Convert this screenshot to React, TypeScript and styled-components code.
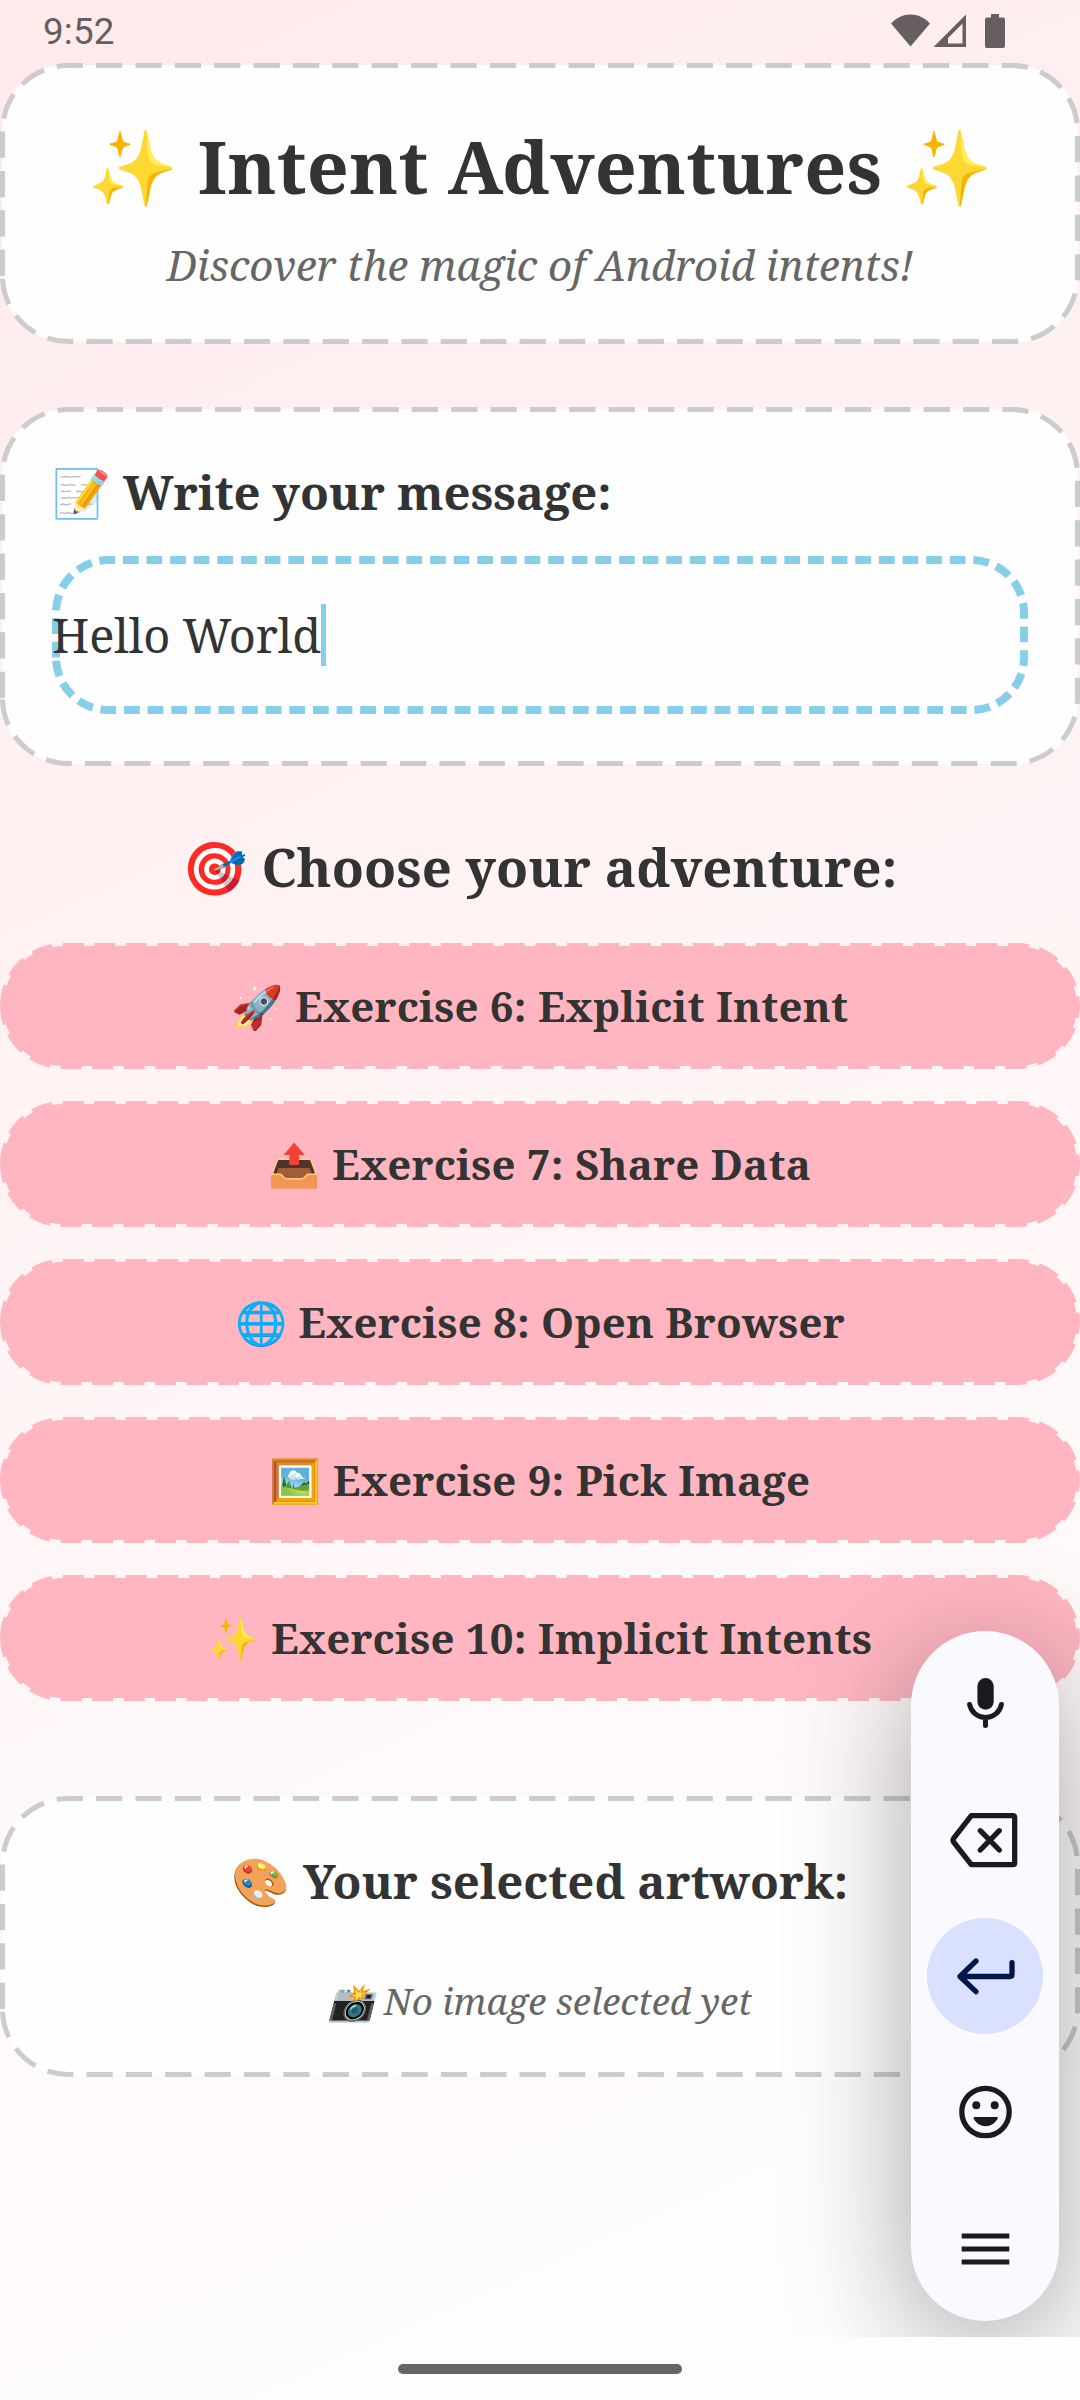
import React from "react";
import styled, { createGlobalStyle } from "styled-components";

const serif = `"Noto Serif", "DejaVu Serif Condensed", "DejaVu Serif", "Noto Color Emoji", serif`;

const GlobalStyle = createGlobalStyle`
  body { margin: 0; }
  * { box-sizing: border-box; }
`;

const Screen = styled.div`
  position: relative;
  width: 1080px;
  height: 2400px;
  overflow: hidden;
  display: flex;
  flex-direction: column;
  background: linear-gradient(155.8deg, #ffeaec 0%, #fff3f4 38%, #fefefe 100%);
  font-family: ${serif};
  color: #333333;
`;

const StatusBar = styled.header`
  height: 63px;
  flex: none;
  display: flex;
  align-items: flex-start;
  justify-content: space-between;
  padding: 11px 70px 0 43px;
  font: 400 36.75px/42px Roboto, sans-serif;
  letter-spacing: 0.2px;
  color: #665f60;
`;

const StatusIcons = styled.svg`
  margin-top: 2px;
`;

const Frame = styled.svg`
  position: absolute;
  inset: 0;
  pointer-events: none;
`;

const Card = styled.section<{ $h: number; $mt: number; $align: string }>`
  position: relative;
  flex: none;
  height: ${(p) => p.$h}px;
  margin-top: ${(p) => p.$mt}px;
  padding: 50px;
  display: flex;
  flex-direction: column;
  align-items: ${(p) => p.$align};
  border: 2px solid transparent;
  border-radius: 66px;
  background: #fefefe padding-box;
`;

const Line = styled.div<{ $size: number; $h: number; $ls?: number; $bold?: boolean; $italic?: boolean; $mt?: number }>`
  flex: none;
  display: flex;
  align-items: center;
  gap: ${(p) => p.$size * 0.26}px;
  height: ${(p) => p.$h}px;
  margin-top: ${(p) => p.$mt ?? 0}px;
  font-size: ${(p) => p.$size}px;
  font-weight: ${(p) => (p.$bold ? 700 : 400)};
  font-style: ${(p) => (p.$italic ? "italic" : "normal")};
  letter-spacing: ${(p) => p.$ls ?? 0}px;
  color: ${(p) => (p.$italic ? "#666666" : "#333333")};
  line-height: 1;
  white-space: nowrap;
`;

const Emoji = styled.span``;

const Field = styled.div`
  position: relative;
  width: 976px;
  height: 158px;
  margin-top: 32px;
  display: flex;
  align-items: center;
`;

const FieldText = styled.span`
  position: relative;
  font-size: 47px;
  line-height: 76px;
  letter-spacing: -0.08px;
`;

const Caret = styled.span`
  width: 5px;
  height: 62px;
  background: #87ceeb;
`;

const Heading = styled.div`
  flex: none;
  display: flex;
  justify-content: center;
  margin-top: 54px;
`;

const List = styled.div`
  flex: none;
  display: flex;
  flex-direction: column;
  gap: 32px;
  margin-top: 28px;
`;

const ActionButton = styled.button`
  position: relative;
  height: 126px;
  width: 100%;
  padding: 0;
  border: 3px solid transparent;
  border-radius: 63px;
  background: #ffb6c1 padding-box;
  display: flex;
  align-items: center;
  justify-content: center;
  font-family: inherit;
`;

const ToolbarLayer = styled.div`
  position: absolute;
  left: 0;
  top: 0;
  width: 1080px;
  height: 2337px;
  overflow: hidden;
  pointer-events: none;
`;

const Toolbar = styled.div`
  position: absolute;
  left: 911px;
  top: 1631px;
  width: 148px;
  height: 690px;
  padding: 4px 0;
  border-radius: 74px;
  background: #f9f9ff;
  box-shadow: 0 28px 120px rgba(0, 0, 0, 0.35);
  display: flex;
  flex-direction: column;
  align-items: center;
`;

const Key = styled.div<{ $active?: boolean }>`
  height: 136.4px;
  width: 148px;
  display: flex;
  align-items: center;
  justify-content: center;
  background: ${(p) => (p.$active ? "radial-gradient(circle, #dae1ff 57.7px, transparent 58.3px)" : "none")};
  color: ${(p) => (p.$active ? "#00174b" : "#1a1b21")};
`;

const NavHandle = styled.div`
  position: absolute;
  left: 398px;
  top: 2364px;
  width: 284px;
  height: 10px;
  border-radius: 5px;
  background: #666666;
`;

/** Dashed rounded outline; the dash run begins at the lower end of the left side and goes clockwise. */
function Dashes({ w, h, r, stroke, dash, gap, color }: { w: number; h: number; r: number; stroke: number; dash: number; gap: number; color: string }) {
  const i = stroke / 2;
  const k = Math.min(r, h / 2 - i);
  const d = `M${i} ${h - i - k}V${i + k}A${k} ${k} 0 0 1 ${i + k} ${i}H${w - i - k}A${k} ${k} 0 0 1 ${w - i} ${i + k}V${h - i - k}A${k} ${k} 0 0 1 ${w - i - k} ${h - i}H${i + k}A${k} ${k} 0 0 1 ${i} ${h - i - k}`;
  return <path d={d} fill="none" stroke={color} strokeWidth={stroke} strokeDasharray={`${dash} ${gap}`} />;
}

const CardFrame = styled(Frame)`
  inset: -2px;
`;
const ButtonFrame = styled(Frame)`
  inset: -3px;
`;

function CardOutline({ h }: { h: number }) {
  return (
    <CardFrame width="1080" height={h}>
      <Dashes w={1080} h={h} r={65.6} stroke={5} dash={26.25} gap={13.125} color="#cccccc" />
    </CardFrame>
  );
}

function KeyIcon({ children }: { children: React.ReactNode }) {
  return (
    <svg width="72" height="72" viewBox="0 0 72 72" fill="none" stroke="currentColor" strokeWidth="5.3" strokeLinecap="round" strokeLinejoin="round">
      {children}
    </svg>
  );
}

const actions = [
  { icon: "🚀", label: "Exercise 6: Explicit Intent" },
  { icon: "📤", label: "Exercise 7: Share Data" },
  { icon: "🌐", label: "Exercise 8: Open Browser" },
  { icon: "🖼️", label: "Exercise 9: Pick Image" },
  { icon: "✨", label: "Exercise 10: Implicit Intents" },
];

export default function App() {
  return (
    <Screen>
      <GlobalStyle />
      <StatusBar>
        <span>9:52</span>
        <StatusIcons width="120" height="36" viewBox="890 13 120 36" fill="#665f60">
          <path d="M891 23.5C902 11.500 919 11.500 930 23.500L910.500 46.500Z" />
          <path fillRule="evenodd" d="M966 14.500V47H933.500ZM962.500 23.500L948 38V43.500H962.500Z" />
          <path d="M991 14h8v3.500h4a2 2 0 0 1 2 2v26.500a2 2 0 0 1-2 2h-16a2 2 0 0 1-2-2v-26.500a2 2 0 0 1 2-2h4z" />
        </StatusIcons>
      </StatusBar>

      <Card $h={281} $mt={0} $align="center">
        <CardOutline h={281} />
        <Line $size={73.5} $h={101} $ls={0.25} $bold>
          <Emoji>✨</Emoji>
          <span>Intent Adventures</span>
          <Emoji>✨</Emoji>
        </Line>
        <Line $size={42} $h={58} $mt={20} $ls={-0.06} $italic>
          Discover the magic of Android intents!
        </Line>
      </Card>

      <Card $h={359} $mt={63} $align="flex-start">
        <CardOutline h={359} />
        <Line $size={47.25} $h={64} $mt={1} $ls={-0.1} $bold>
          <Emoji>📝</Emoji>
          <span>Write your message:</span>
        </Line>
        <Field>
          <Frame width="976" height="158">
            <Dashes w={976} h={158} r={52.5} stroke={8} dash={15.75} gap={7.875} color="#87ceeb" />
          </Frame>
          <FieldText>Hello World</FieldText>
          <Caret />
        </Field>
      </Card>

      <Heading>
        <Line $size={52.5} $h={95} $ls={0.08} $bold>
          <Emoji>🎯</Emoji>
          <span>Choose your adventure:</span>
        </Line>
      </Heading>

      <List>
        {actions.map((a) => (
          <ActionButton key={a.label}>
            <ButtonFrame width="1080" height="126">
              <Dashes w={1080} h={126} r={65.6} stroke={5.25} dash={21} gap={10.5} color="#ffb6c1" />
            </ButtonFrame>
            <Line as="span" $size={42} $h={60} $ls={0.22} $bold>
              <Emoji>{a.icon}</Emoji>
              <span>{a.label}</span>
            </Line>
          </ActionButton>
        ))}
      </List>

      <Card $h={281} $mt={95} $align="center">
        <CardOutline h={281} />
        <Line $size={47.25} $h={64} $mt={1} $bold>
          <Emoji>🎨</Emoji>
          <span>Your selected artwork:</span>
        </Line>
        <Line $size={36.75} $h={50} $mt={63} $italic>
          <Emoji>📸</Emoji>
          <span>No image selected yet</span>
        </Line>
      </Card>

      <ToolbarLayer>
        <Toolbar>
          <Key>
            <KeyIcon>
              <rect x="28.400" y="11" width="16.300" height="31.700" rx="8.150" fill="currentColor" stroke="none" />
              <path d="M20.600 37.500A16.200 16.200 0 0 0 52.400 37.500M36.500 50.500V58.500" strokeWidth="5" />
            </KeyIcon>
          </Key>
          <Key>
            <KeyIcon>
              <path d="M22.300 11.700H63.700Q65.700 11.700 65.700 13.700V58.700Q65.700 60.700 63.700 60.700H22.300L4.600 38Q3.400 36.200 4.600 34.400ZM31.300 26.700L50.300 46M50.300 26.700L31.300 46" />
            </KeyIcon>
          </Key>
          <Key $active>
            <KeyIcon>
              <path d="M27 21L11 36.500L27 51.700M11 36.500H61Q63 36.500 63 34.500V22.700" />
            </KeyIcon>
          </Key>
          <Key>
            <KeyIcon>
              <circle cx="36.500" cy="36" r="23.700" />
              <circle cx="27.300" cy="29.300" r="4" fill="currentColor" stroke="none" />
              <circle cx="45.700" cy="29.300" r="4" fill="currentColor" stroke="none" />
              <path d="M25.500 41H47.800Q49.500 41 48.700 42.500C46 47.500 41.500 50.200 36.600 50.200S27.300 47.500 24.600 42.500Q23.800 41 25.500 41Z" fill="currentColor" stroke="none" />
            </KeyIcon>
          </Key>
          <Key>
            <KeyIcon>
              <path d="M12.700 23H60.300M12.700 36H60.300M12.700 49H60.300" strokeLinecap="butt" strokeWidth="5" />
            </KeyIcon>
          </Key>
        </Toolbar>
      </ToolbarLayer>
      <NavHandle />
    </Screen>
  );
}
